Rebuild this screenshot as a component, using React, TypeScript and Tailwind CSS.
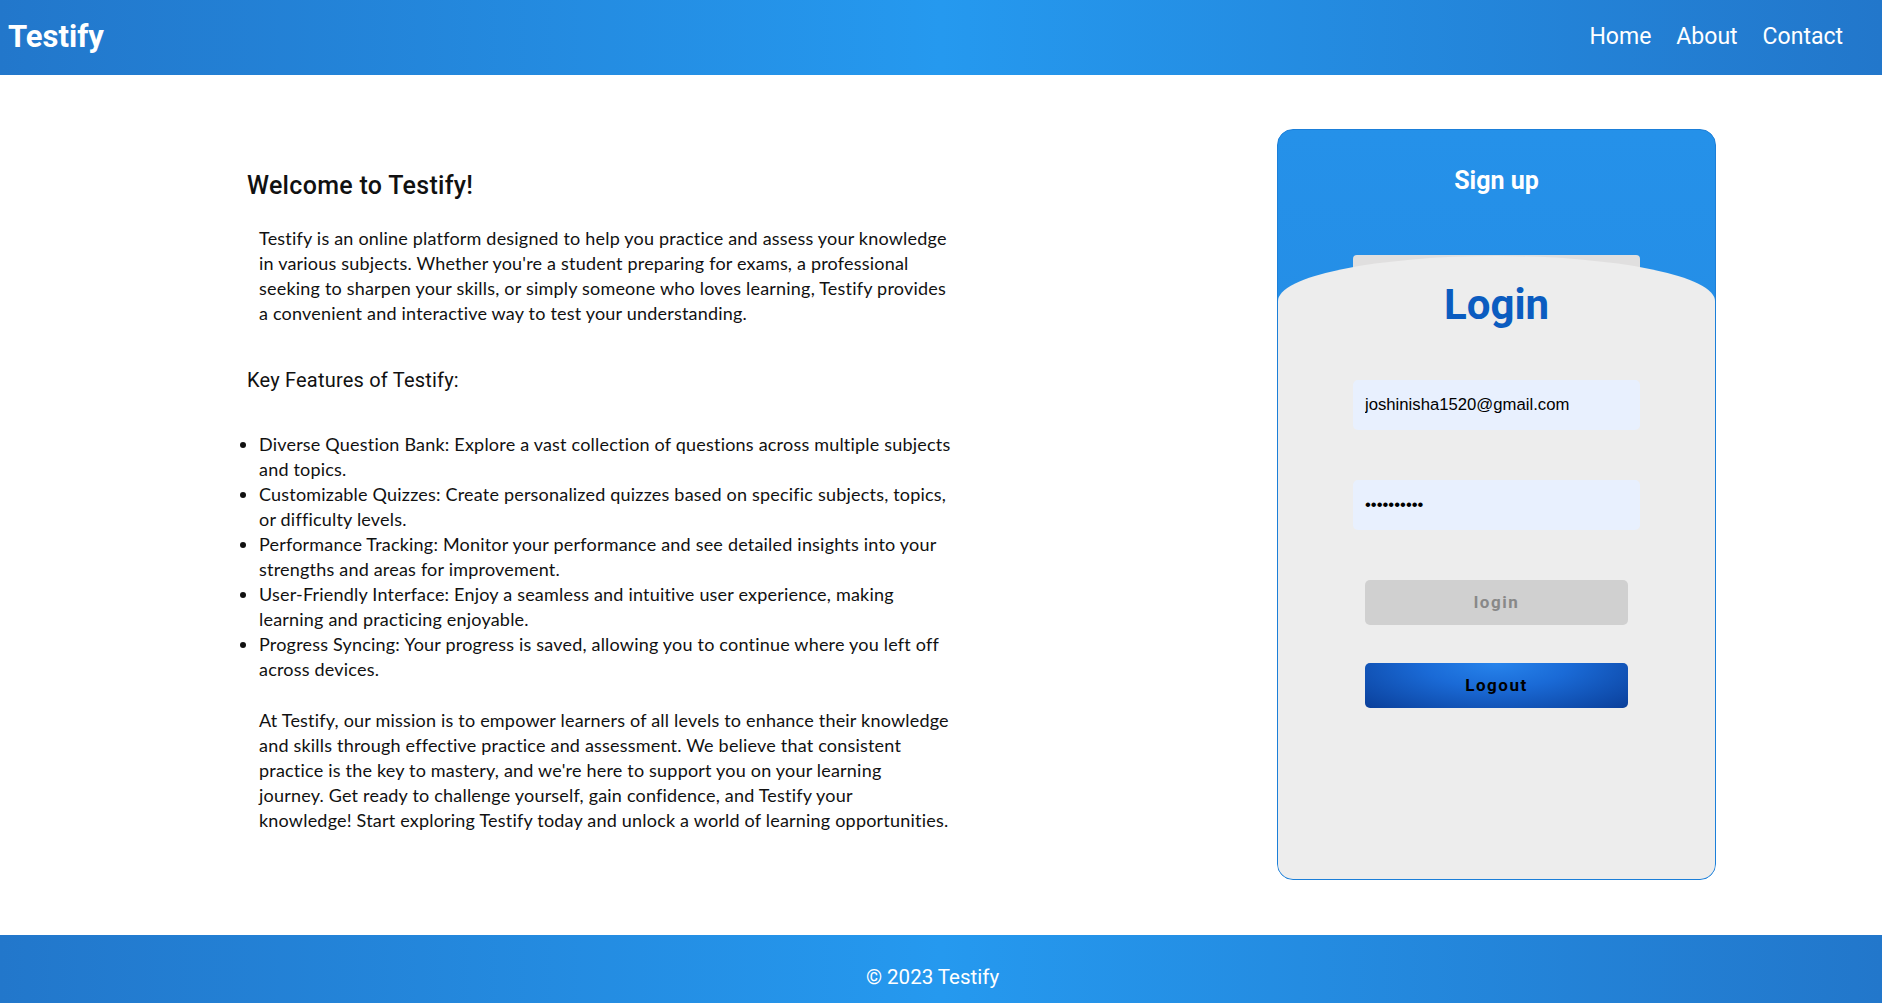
const features = [
  ["Diverse Question Bank: Explore a vast collection of questions across multiple subjects", "and topics."],
  ["Customizable Quizzes: Create personalized quizzes based on specific subjects, topics,", "or difficulty levels."],
  ["Performance Tracking: Monitor your performance and see detailed insights into your", "strengths and areas for improvement."],
  ["User-Friendly Interface: Enjoy a seamless and intuitive user experience, making", "learning and practicing enjoyable."],
  ["Progress Syncing: Your progress is saved, allowing you to continue where you left off", "across devices."],
]

const App = () => {
  return (
    <div className="min-h-screen flex flex-col bg-white font-['Roboto',sans-serif]">
      <header className="h-[75px] flex items-center justify-between pl-2 pr-[39px] bg-linear-to-r from-[#2277cb] via-[#2599ef] to-[#2277cb] text-white">
        <h1 className="text-[31px] font-bold">Testify</h1>
        <nav className="flex gap-[25px] text-[23px]">
          <a>Home</a>
          <a>About</a>
          <a>Contact</a>
        </nav>
      </header>

      <main className="flex-1 flex items-start pl-[247px] pr-[166px] pt-[54px] pb-[55px]">
        <section className="pt-[43px] text-[#111]">
          <h2 className="text-[25px] leading-[28px] font-medium tracking-[0.3px]">Welcome to Testify!</h2>
          <p className="mt-[26px] pl-3 font-['Lato',sans-serif] text-[18px] leading-[25px] tracking-[0.2px] whitespace-nowrap">
            Testify is an online platform designed to help you practice and assess your knowledge
            <br />
            in various subjects. Whether you're a student preparing for exams, a professional
            <br />
            seeking to sharpen your skills, or simply someone who loves learning, Testify provides
            <br />
            a convenient and interactive way to test your understanding.
          </p>
          <h3 className="mt-[42px] text-[20px] leading-[24px] tracking-[0.2px]">Key Features of Testify:</h3>
          <ul className="mt-[40px] pl-3 list-disc font-['Lato',sans-serif] text-[18px] leading-[25px] tracking-[0.2px] whitespace-nowrap">
            {features.map(([a, b]) => (
              <li key={a}>
                {a}
                <br />
                {b}
              </li>
            ))}
          </ul>
          <p className="mt-[26px] pl-3 font-['Lato',sans-serif] text-[18px] leading-[25px] tracking-[0.2px] whitespace-nowrap">
            At Testify, our mission is to empower learners of all levels to enhance their knowledge
            <br />
            and skills through effective practice and assessment. We believe that consistent
            <br />
            practice is the key to mastery, and we're here to support you on your learning
            <br />
            journey. Get ready to challenge yourself, gain confidence, and Testify your
            <br />
            knowledge! Start exploring Testify today and unlock a world of learning opportunities.
          </p>
        </section>

        <div className="relative ml-auto w-[439px] h-[751px] flex flex-col rounded-[16px] border border-[#1b7fd9] overflow-hidden bg-linear-to-b from-[#2591e9] to-[#2386df]">
          <div className="h-[126px] pt-[37px] text-center text-white text-[25px] leading-[28px] font-bold">Sign up</div>
          <div className="absolute top-[125px] left-[75px] w-[287px] h-[24px] rounded-[4px] bg-[#e0dfdf]" />
          <div className="relative flex-1 flex flex-col items-center bg-[#ededed] rounded-t-[50%_45px]">
            <h2 className="pt-[24px] text-[42px] leading-[50px] font-bold text-[#0b5cc0]">Login</h2>
            <input
              readOnly
              type="email"
              defaultValue="joshinisha1520@gmail.com"
              className="mt-[50px] w-[287px] h-[50px] rounded-[5px] bg-[#e8f0fe] px-3 text-[16.7px] text-black font-['Liberation_Sans',Arial,sans-serif] outline-none"
            />
            <input
              readOnly
              type="password"
              defaultValue="abcdefghij"
              className="mt-[50px] w-[287px] h-[50px] rounded-[5px] bg-[#e8f0fe] px-3 text-[16.7px] text-black font-['Liberation_Sans',Arial,sans-serif] outline-none"
            />
            <button className="mt-[50px] w-[263px] h-[45px] rounded-[5px] bg-[#d0d0d0] text-[#888] text-[17px] font-bold tracking-[1.5px]">
              login
            </button>
            <button className="mt-[38px] w-[263px] h-[45px] rounded-[5px] bg-[radial-gradient(ellipse_at_50%_0%,#2784ec_0%,#1a6ad6_40%,#0a3f9a_100%)] text-black text-[17px] font-bold tracking-[1.5px]">
              Logout
            </button>
          </div>
        </div>
      </main>

      <footer className="h-[68px] flex justify-center pt-[30px] pr-[17px] bg-linear-to-r from-[#2277cb] via-[#2599ef] to-[#2277cb] text-white text-[20.5px] leading-[24px]">
        © 2023 Testify
      </footer>
    </div>
  )
}

export default App
